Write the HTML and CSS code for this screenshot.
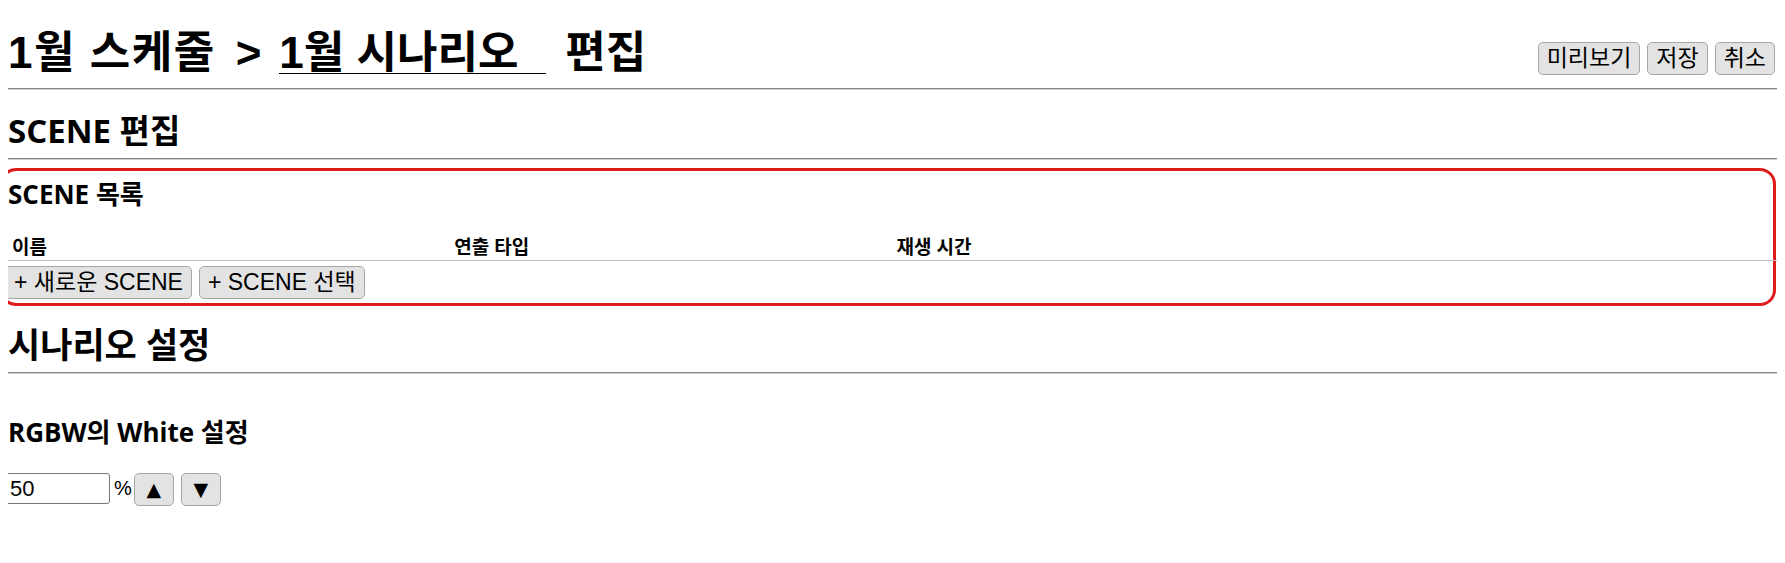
FILE: index.html
```html
<!DOCTYPE html>
<html lang="ko">
<head>
<meta charset="utf-8">
<title>시나리오 편집</title>
<link rel="stylesheet" href="styles.css">
</head>
<body>
<header class="page-head">
  <h1 class="page-title"><span class="crumb">1월 스케줄</span><span class="crumb-sep">&gt;</span><input class="title-input" type="text" value="1월 시나리오"><span class="title-suffix">편집</span></h1>
  <div class="head-actions">
    <button class="btn">미리보기</button>
    <button class="btn">저장</button>
    <button class="btn">취소</button>
  </div>
</header>
<hr class="rule rule-head">
<h2 class="section-title section-first">SCENE 편집</h2>
<hr class="rule">
<section class="scene-box">
  <h3 class="sub-title scene-title">SCENE 목록</h3>
  <table class="scene-table">
    <thead>
      <tr><th>이름</th><th>연출 타입</th><th>재생 시간</th><th></th></tr>
    </thead>
    <tbody></tbody>
  </table>
  <div class="scene-actions">
    <button class="btn">+ 새로운 SCENE</button>
    <button class="btn">+ SCENE 선택</button>
  </div>
</section>
<h2 class="section-title section-second">시나리오 설정</h2>
<hr class="rule">
<h3 class="sub-title white-title">RGBW의 White 설정</h3>
<div class="white-row">
  <input class="num-input" type="text" value="50">
  <span class="unit">%</span>
  <button class="btn btn-step">▲</button>
  <button class="btn btn-step">▼</button>
</div>
</body>
</html>
```

FILE: styles.css
```css
* { box-sizing: border-box; }

html, body { background: #ffffff; }

body {
  margin: 0 8px;
  color: #000000;
  font-family: "Open Sans", "Noto Sans CJK KR", sans-serif;
}

.page-head {
  display: flex;
  justify-content: space-between;
  align-items: flex-start;
  padding-top: 24px;
}

.page-title {
  margin: 0;
  height: 51px;
  font: bold 44px/48px "Liberation Sans", "Noto Sans CJK KR", sans-serif;
  white-space: nowrap;
}

.crumb { letter-spacing: 1.5px; }

.crumb-sep { margin: 0 18px 0 20px; }

.title-input {
  font: inherit;
  color: #000000;
  width: 267px;
  height: 50px;
  line-height: 49px;
  padding: 0;
  margin: 0 19px 0 0;
  border: 0;
  border-bottom: 1px solid #000000;
  background: transparent;
  vertical-align: baseline;
  outline: none;
}

.head-actions {
  display: flex;
  gap: 7px;
  margin-top: 18px;
  margin-right: 2px;
}

.btn {
  font: 23px/25px "Liberation Sans", "Noto Sans CJK KR", sans-serif;
  color: #000000;
  background: #e3e3e3;
  border: 1px solid #a6a6a6;
  border-radius: 5px;
  padding: 3px 8px;
  height: 33px;
}

.rule {
  height: 0;
  margin: 7px 0 0;
  border: 0;
  border-top: 1px solid #858585;
  border-bottom: 1px solid #cfcfcf;
}

.rule-head { margin-top: 13px; }

.section-title {
  margin: 0;
  font: bold 33px/40px "Open Sans", "Noto Sans CJK KR", sans-serif;
}

.section-first { margin-top: 21px; }
.section-second { margin-top: 19px; font-size: 35px; }

.scene-box {
  margin: 8px 1px 0 -8px;
  border: 3px solid #e01b1b;
  border-radius: 16px;
  padding: 0 0 4px 5px;
}

.sub-title {
  font: bold 26px/30px "Open Sans", "Noto Sans CJK KR", sans-serif;
}

.scene-title { margin: 8px 0 28px; }

.scene-table {
  width: calc(100% + 4px);
  border-collapse: collapse;
  border-spacing: 0;
  table-layout: fixed;
}

.scene-table th {
  width: 25%;
  text-align: left;
  font: bold 19px/20px "Open Sans", "Noto Sans CJK KR", sans-serif;
  padding: 0 4px 3px;
  border-bottom: 1px solid #bdbdbd;
}

.scene-actions {
  display: flex;
  gap: 7px;
  margin: 5px 0 0 -3px;
}

.white-title { margin: 43px 0 26px; }

.white-row {
  display: flex;
  align-items: flex-start;
  margin-left: -4px;
}

.num-input {
  width: 106px;
  height: 31px;
  font: 22px "Liberation Sans", sans-serif;
  color: #000000;
  padding: 0 5px;
  border: 1px solid #767676;
  border-radius: 3px;
  background: #ffffff;
}

.unit {
  font: 20px/31px "Liberation Sans", sans-serif;
  margin: 0 2px 0 4px;
}

.btn-step {
  width: 40px;
  padding: 0;
  margin-right: 7px;
  font: 19px/25px "DejaVu Sans", sans-serif;
}
```
